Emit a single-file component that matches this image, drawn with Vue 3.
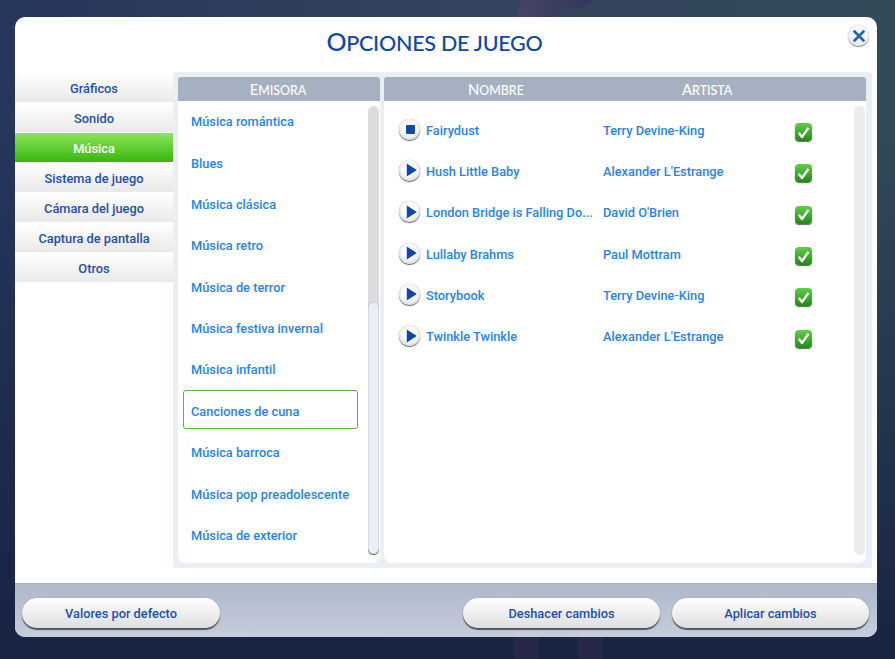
<script setup>
const tabs = [
  { name: 'Gráficos' },
  { name: 'Sonido' },
  { name: 'Música', active: true },
  { name: 'Sistema de juego' },
  { name: 'Cámara del juego' },
  { name: 'Captura de pantalla' },
  { name: 'Otros' },
]
const stations = [
  'Música romántica', 'Blues', 'Música clásica', 'Música retro', 'Música de terror',
  'Música festiva invernal', 'Música infantil', 'Canciones de cuna', 'Música barroca',
  'Música pop preadolescente', 'Música de exterior',
]
const tracks = [
  { name: 'Fairydust', artist: 'Terry Devine-King', playing: true },
  { name: 'Hush Little Baby', artist: "Alexander L'Estrange" },
  { name: 'London Bridge is Falling Do...', artist: "David O'Brien" },
  { name: 'Lullaby Brahms', artist: 'Paul Mottram' },
  { name: 'Storybook', artist: 'Terry Devine-King' },
  { name: 'Twinkle Twinkle', artist: "Alexander L'Estrange" },
]
</script>

<template>
  <div class="page">
    <div class="figure"></div>
    <div class="leg leg-a"></div>
    <div class="leg leg-b"></div>
    <section class="modal">
      <header class="title-bar">
        <h1>Opciones de juego</h1>
        <button class="close" aria-label="Cerrar">
          <svg width="12" height="12" viewBox="0 0 12 12"><path d="M1.5 1.5 10.5 10.5M10.5 1.5 1.5 10.5" stroke="#1f5fb8" stroke-width="2.6" stroke-linecap="round" fill="none"/></svg>
        </button>
      </header>
      <div class="content">
        <nav class="tabs">
          <div v-for="t in tabs" :key="t.name" class="tab" :class="{ active: t.active }">{{ t.name }}</div>
        </nav>
        <div class="panel">
          <div class="col col-left">
            <div class="head">Emisora</div>
            <div class="body">
              <ul class="stations">
                <li v-for="s in stations" :key="s" :class="{ selected: s === 'Canciones de cuna' }"><span>{{ s }}</span></li>
              </ul>
              <div class="track-bar dark"><div class="thumb"></div></div>
            </div>
          </div>
          <div class="col col-right">
            <div class="head head-split"><span class="h-name">Nombre</span><span class="h-artist">Artista</span></div>
            <div class="body">
              <ul class="tracks">
                <li v-for="t in tracks" :key="t.name">
                  <span class="play">
                    <svg v-if="t.playing" class="ico-stop" width="9" height="9" viewBox="0 0 9 9"><rect x="0" y="0" width="9" height="9" rx="1" fill="#0d47a8"/></svg>
                    <svg v-else class="ico-play" width="11" height="14" viewBox="0 0 11 14"><path d="M.8 .6 10.8 7 .8 13.4Z" fill="#0d47a8"/></svg>
                  </span>
                  <span class="t-name">{{ t.name }}</span>
                  <span class="t-artist">{{ t.artist }}</span>
                  <span class="check">
                    <svg width="13" height="13" viewBox="0 0 13 13"><path d="M1.8 6.8 5 11 11.4 1.8" stroke="#fff" stroke-width="2.3" fill="none" stroke-linejoin="round"/></svg>
                  </span>
                </li>
              </ul>
              <div class="track-bar"></div>
            </div>
          </div>
        </div>
      </div>
      <footer class="footer">
        <button class="btn">Valores por defecto</button>
        <div class="btn-group">
          <button class="btn narrow">Deshacer cambios</button>
          <button class="btn narrow">Aplicar cambios</button>
        </div>
      </footer>
    </section>
  </div>
</template>

<style>
html, body { margin: 0; padding: 0; }
</style>

<style scoped>
* { box-sizing: border-box; }
.page {
  width: 895px; height: 659px; overflow: hidden; position: relative;
  padding: 17px 18px 0 15px;
  font-family: "Roboto", "Liberation Sans", sans-serif;
  background:
    linear-gradient(rgba(24, 35, 68, 0) 20%, rgba(24, 35, 68, .95) 96%),
    linear-gradient(92deg, #26365c 0%, #33445f 50%, #334a58 100%);
}
.figure {
  position: absolute; left: 516px; top: 0; width: 76px; height: 17px;
  background: linear-gradient(90deg, #45456a, #33365a);
  clip-path: polygon(6% 0, 100% 0, 96% 30%, 88% 50%, 66% 50%, 48% 100%, 0 100%);
}
.leg { position: absolute; top: 637px; height: 22px; background: #25284a; }
.leg-a { left: 514px; width: 25px; }
.leg-b { left: 578px; width: 25px; }
.modal {
  position: relative; z-index: 1;
  width: 862px; height: 620px; border-radius: 10px; overflow: hidden;
  background: #fff; display: flex; flex-direction: column;
}
.title-bar { height: 55px; position: relative; display: flex; justify-content: center; }
h1 {
  margin: 6px 0 0; font-family: "Lato", sans-serif; font-weight: 500; font-size: 21.5px; line-height: 36px;
  text-transform: uppercase; color: #0d47a8; letter-spacing: -.25px; padding-right: 23px;
}
h1::first-letter { font-size: 25px; }
.close {
  position: absolute; right: 8px; top: 8px; width: 21px; height: 21px; border-radius: 50%; border: 0; padding: 0;
  background: radial-gradient(circle at 50% 40%, #fff 0, #f2f4f8 55%, #c2c5cc 100%);
  box-shadow: 0 1px 1px #77808c, 0 0 1px #9aa;
  display: flex; align-items: center; justify-content: center;
}
.content { display: flex; height: 511px; }
.tabs { width: 158px; padding-top: 1px; }
.tab {
  height: 29px; margin-bottom: 1px; text-align: center; line-height: 31px;
  font-size: 12.8px; font-weight: 500; color: #1c4fb0;
  background: linear-gradient(#fff, #e9e9ea);
}
.tab.active { color: #fff; background: linear-gradient(#8fe45c, #35b80d); }
.panel {
  width: 699px; height: 496px; padding: 5px 6px 5px 5px; background: #eaeff6;
  border-radius: 3px; display: flex; gap: 4px;
}
.col { display: flex; flex-direction: column; border-radius: 3px; overflow: hidden; }
.col-left { width: 202px; }
.col-right { width: 482px; }
.head {
  height: 24px; flex: none; background: #a5b0c0; color: #fff; text-align: center;
  font-family: "Lato", sans-serif; text-transform: uppercase; font-size: 12.4px; line-height: 24px; font-weight: 500;
  padding-right: 2px;
}
.head::first-letter { font-size: 14.8px; }
.head-split { display: block; position: relative; }
.h-name { position: absolute; left: 84px; }
.h-artist { position: absolute; left: 298px; }
.h-name::first-letter, .h-artist::first-letter { font-size: 14.8px; }
.body { flex: 1; background: #fff; position: relative; border-radius: 0 0 8px 8px; }
ul { list-style: none; margin: 0; padding: 0; }
.stations { width: 180px; padding-top: .45px; }
.stations li {
  height: 41.4px; padding-left: 8px; display: flex; align-items: center;
  font-size: 12.8px; font-weight: 500; color: #2685ea; margin-left: 5px; border-radius: 3px; padding-bottom: 1px;
}
.stations li.selected {
  border: 1px solid #4fb83a; padding: 3.6px 0 0 7px;
  height: 39px; margin: -1.15px 0 3.55px 5px; width: 175px;
}
.track-bar {
  position: absolute; right: 1px; top: 5px; bottom: 8px; width: 11px; border-radius: 6px; background: #ececec;
}
.track-bar.dark { background: #dcdcdc; right: 1px; }
.thumb {
  position: absolute; left: 0; right: 0; top: 196px; bottom: 0; border-radius: 6px;
  background: #eaeff5; box-shadow: inset 0 -1px 1px #666, inset 0 0 1px #99a;
}
.tracks { padding-top: 8.5px; }
.tracks li { height: 41.3px; display: flex; align-items: center; position: relative; font-size: 12.8px; font-weight: 500; color: #2685ea; }
.play {
  width: 21px; height: 21px; margin-left: 15px; border-radius: 50%; flex: none;
  background: radial-gradient(circle at 50% 42%, #fff 0, #f6f7fa 50%, #b9bbc2 100%);
  box-shadow: 0 1px 1px #555b63, 0 0 1px #888;
  display: flex; align-items: center; justify-content: center;
  position: relative; top: -1px;
}
.ico-play { margin-left: 3px; }
.ico-stop { margin-left: 1px; }
.t-name { width: 177px; margin-left: 6px; flex: none; white-space: nowrap; }
.t-artist { width: 192px; flex: none; white-space: nowrap; }
.check {
  width: 17px; height: 18px; border-radius: 4px; position: relative; top: 2px;
  background: linear-gradient(#62cf48, #1e8a14);
  box-shadow: 0 1px 1px #5b6b5b;
  display: flex; align-items: center; justify-content: center;
}
.footer {
  height: 54px; flex: none; padding: 14px 8px 0 7px;
  background: linear-gradient(#aeb8cc, #c6cddb); border-top: 1px solid #a2adbf;
  display: flex; justify-content: space-between; align-items: flex-start;
}
.btn-group { display: flex; gap: 12px; }
.btn {
  width: 198px; height: 30px; border: 0; border-radius: 15px; padding: 0;
  font-family: inherit; font-size: 12.8px; font-weight: 500; color: #1c4fb0;
  background: linear-gradient(#fff, #dedede);
  box-shadow: 0 2px 1px #50555d, 0 0 1px #777;
}
.btn.narrow { width: 197px; }
</style>
